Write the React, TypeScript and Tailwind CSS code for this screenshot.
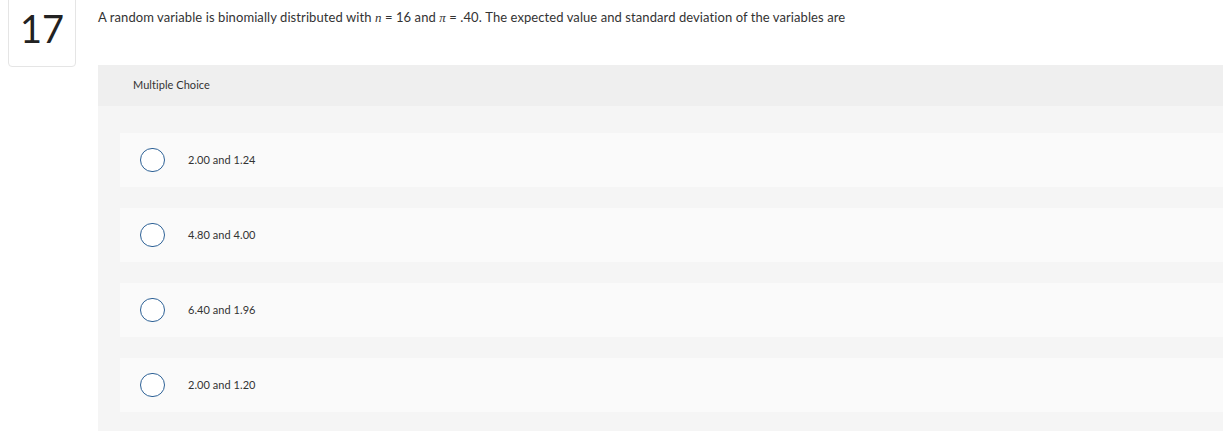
import React from "react";

const OPTIONS = ["2.00 and 1.24", "4.80 and 4.00", "6.40 and 1.96", "2.00 and 1.20"];

function Radio() {
  return (
    <span className="block h-[24px] w-[25px] shrink-0 rounded-full border-[1.5px] border-[#2d6196] bg-white" />
  );
}

export default function App() {
  return (
    <div className="flex h-[431px] w-[1223px] overflow-hidden bg-white font-['Lato',sans-serif] text-[#333]">
      {/* Question number */}
      <div className="ml-[8px] mt-[-10px] flex h-[77px] w-[68px] shrink-0 items-center justify-center rounded-[4px] border border-[#e5e5e5] pb-[2px]">
        <span className="text-[38px] font-normal leading-none text-[#222]">17</span>
      </div>

      <div className="ml-[22px] flex min-w-0 flex-1 flex-col">
        <p className="mt-[9px] whitespace-nowrap text-[13px] leading-[16px] tracking-[0.08px] text-[#333]">
          A random variable is binomially distributed with{" "}
          <i className="font-['Liberation_Serif',serif]">n</i> = 16 and{" "}
          <i className="font-['Liberation_Serif',serif]">π</i> = .40. The expected value and
          standard deviation of the variables are
        </p>

        <div className="mt-[39px] flex flex-1 flex-col bg-[#f5f5f5]">
          <div className="flex h-[41px] items-center bg-[#efefef] pl-[35px] text-[11px] tracking-[0.05px] text-[#333]">
            Multiple Choice
          </div>
          <div className="flex flex-col gap-[21px] pl-[22px] pt-[27px]">
            {OPTIONS.map((opt) => (
              <div key={opt} className="flex h-[54px] items-center bg-[#fafafa] pl-[20px]">
                <Radio />
                <span className="ml-[23px] text-[11px] tracking-[0.05px] text-[#333]">{opt}</span>
              </div>
            ))}
          </div>
        </div>
      </div>
    </div>
  );
}
